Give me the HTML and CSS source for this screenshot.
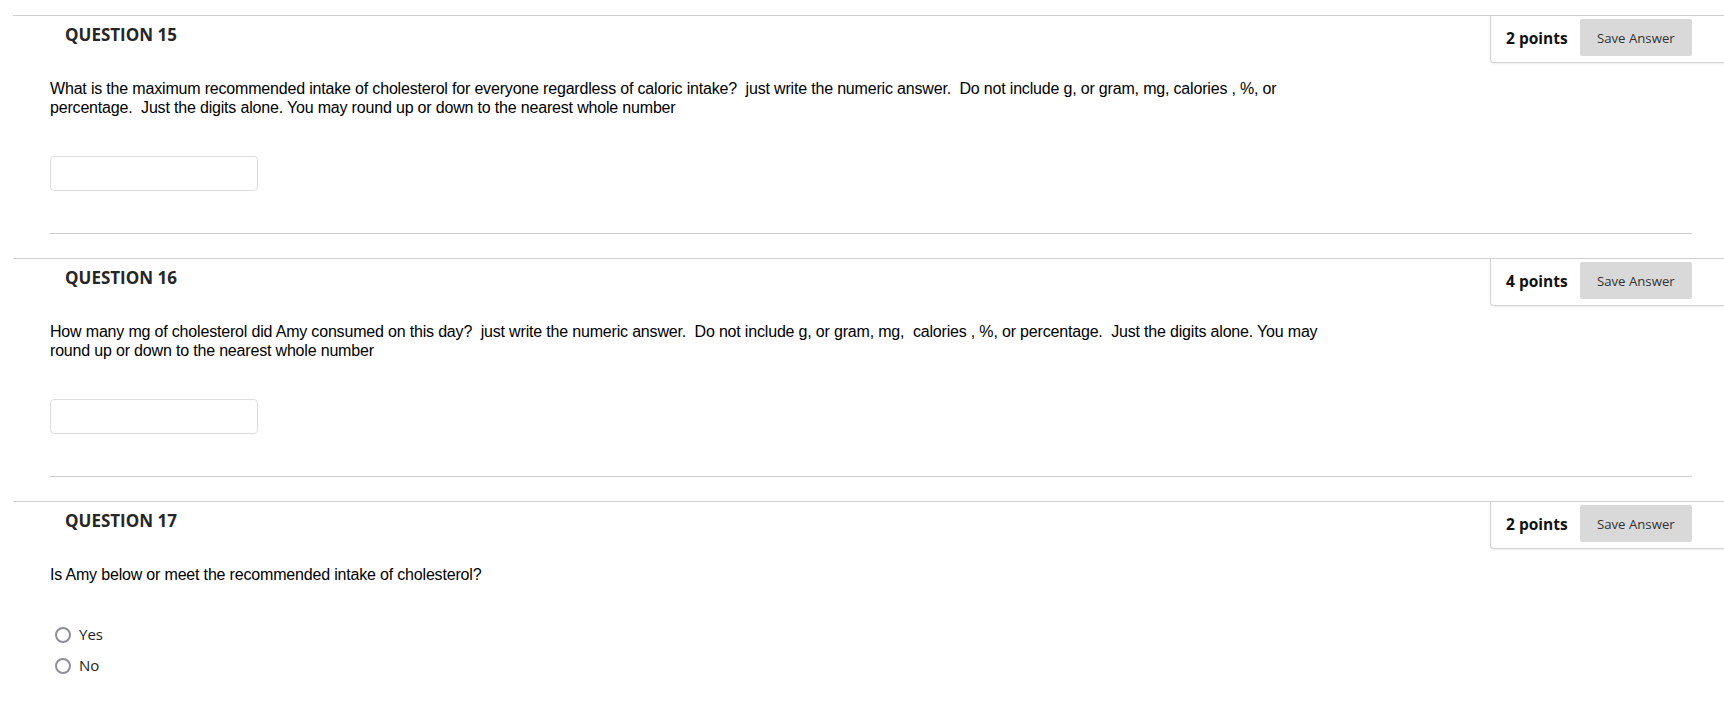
FILE: index.html
```html
<!DOCTYPE html>
<html lang="en">
<head>
<meta charset="utf-8">
<title>Quiz</title>
<link rel="stylesheet" href="styles.css">
</head>
<body>
<div class="quiz">
  <section class="question">
    <div class="q-head">
      <h3 class="q-title">QUESTION 15</h3>
      <div class="q-points">
        <span class="points">2 points</span>
        <button class="save-btn" type="button">Save Answer</button>
      </div>
    </div>
    <div class="q-body">
      <p class="q-text">What is the maximum recommended intake of cholesterol for everyone regardless of caloric intake?&nbsp; just write the numeric answer.&nbsp; Do not include g, or gram, mg, calories , %, or percentage.&nbsp; Just the digits alone. You may round up or down to the nearest whole number</p>
      <input class="answer" type="text" aria-label="Answer">
      <hr class="q-sep">
    </div>
  </section>

  <section class="question">
    <div class="q-head">
      <h3 class="q-title">QUESTION 16</h3>
      <div class="q-points">
        <span class="points">4 points</span>
        <button class="save-btn" type="button">Save Answer</button>
      </div>
    </div>
    <div class="q-body">
      <p class="q-text">How many mg of cholesterol did Amy consumed on this day?&nbsp; just write the numeric answer.&nbsp; Do not include g, or gram, mg,&nbsp; calories , %, or percentage.&nbsp; Just the digits alone. You may round up or down to the nearest whole number</p>
      <input class="answer" type="text" aria-label="Answer">
      <hr class="q-sep">
    </div>
  </section>

  <section class="question">
    <div class="q-head">
      <h3 class="q-title">QUESTION 17</h3>
      <div class="q-points">
        <span class="points">2 points</span>
        <button class="save-btn" type="button">Save Answer</button>
      </div>
    </div>
    <div class="q-body">
      <p class="q-text">Is Amy below or meet the recommended intake of cholesterol?</p>
      <ul class="choices">
        <li class="choice"><span class="radio"></span><span class="choice-label">Yes</span></li>
        <li class="choice"><span class="radio"></span><span class="choice-label">No</span></li>
      </ul>
    </div>
  </section>
</div>
</body>
</html>
```

FILE: styles.css
```css
* {
  box-sizing: border-box;
}

html, body {
  margin: 0;
  padding: 0;
  background: #ffffff;
  overflow: hidden;
}

body {
  font-family: "Open Sans", "Noto Sans", sans-serif;
  color: #222222;
}

.quiz {
  padding: 15px 0 0 13px;
}

.question {
  border-top: 1px solid #cfcfcf;
}

.q-head {
  display: flex;
  justify-content: space-between;
  align-items: flex-start;
}

.q-title {
  margin: 0;
  padding: 7px 0 0 52px;
  font-family: "Open Sans", sans-serif;
  font-weight: 700;
  font-size: 17px;
  line-height: 24px;
  color: #262626;
}

.q-points {
  width: 234px;
  display: flex;
  align-items: center;
  gap: 12px;
  padding: 3px 32px 6px 15px;
  border-left: 1px solid #d4d4d4;
  border-bottom: 1px solid #d4d4d4;
  border-bottom-left-radius: 4px;
  box-shadow: 0 1px 2px rgba(0, 0, 0, 0.08);
  background: #ffffff;
}

.points {
  font-family: "Open Sans", sans-serif;
  font-weight: 700;
  font-size: 15.5px;
  color: #111111;
  white-space: nowrap;
}

.save-btn {
  width: 114px;
  height: 37px;
  margin: 0;
  padding: 0;
  border: none;
  border-radius: 2px;
  background: #d9d9d9;
  font-family: "Open Sans", sans-serif;
  font-size: 13.2px;
  color: #333333;
}

.q-body {
  padding: 16px 32px 24px 37px;
}

.q-text {
  margin: 0;
  max-width: 1290px;
  font-family: "Liberation Sans", Arial, sans-serif;
  font-size: 16px;
  letter-spacing: -0.18px;
  line-height: 19px;
  color: #000000;
}

.answer {
  display: block;
  width: 208px;
  height: 35px;
  margin: 39px 0 0 0;
  border: 1px solid #dedede;
  border-radius: 4px;
  background: #ffffff;
}

.q-sep {
  margin: 42px 0 0 0;
  border: none;
  border-top: 1px solid #cccccc;
  height: 0;
}

.choices {
  list-style: none;
  margin: 35px 0 0 0;
  padding: 0;
}

.choice {
  display: flex;
  align-items: center;
  height: 31px;
  padding-left: 5px;
}

.radio {
  width: 16px;
  height: 16px;
  border: 2px solid #8e8e98;
  border-radius: 50%;
  background: #ffffff;
  flex: none;
}

.choice-label {
  margin-left: 8px;
  font-family: "Open Sans", sans-serif;
  font-size: 15px;
  line-height: 31px;
  color: #222222;
}
```
